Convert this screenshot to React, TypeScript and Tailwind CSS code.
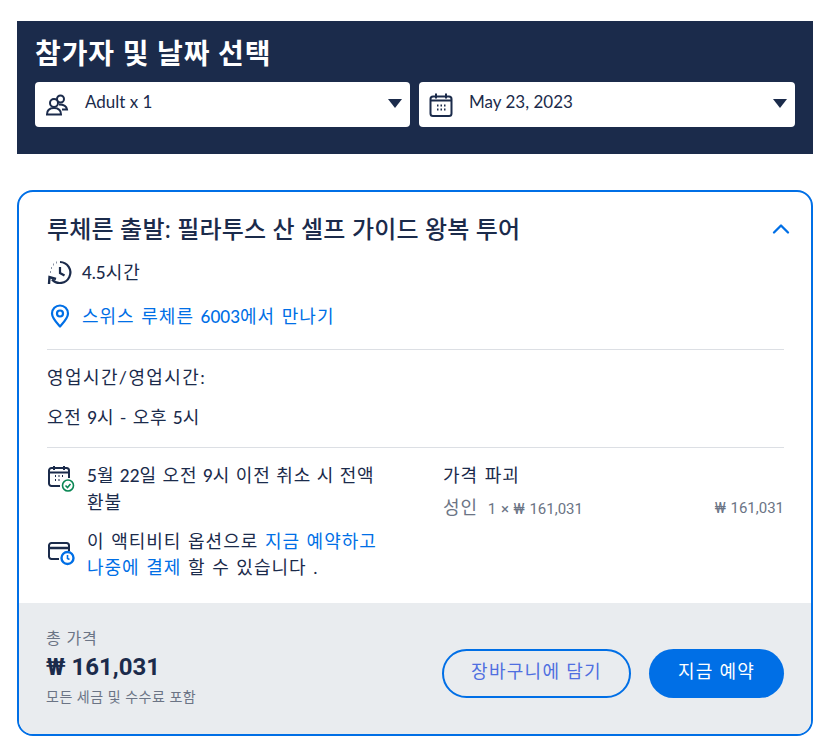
import type { ReactNode } from "react"
import { ChevronUp } from "lucide-react"

const font = { fontFamily: '"Lato", "Noto Sans CJK KR", sans-serif' }

function Num({ children }: { children: ReactNode }) {
  return <span className="text-[17px] font-medium tracking-normal">{children}</span>
}

function Price({ children, className }: { children: ReactNode; className: string }) {
  return <span className={"font-['Roboto'] tracking-normal " + className}>{children}</span>
}

function PeopleIcon() {
  return (
    <svg width="24" height="24" viewBox="0 0 24 24" fill="none" stroke="#1b2b4b" strokeWidth="2">
      <circle cx="15.5" cy="6" r="3.5" />
      <circle cx="9" cy="10" r="4" fill="#fff" />
      <path d="M14 11.5c4 0 7.5 1.5 8 5h-5" />
      <path d="M2 21.500c0-4.500 3-6.500 7-6.500s7 2 7 6.500z" fill="#fff" />
    </svg>
  )
}

function CalendarIcon() {
  return (
    <svg width="24" height="24" viewBox="0 0 24 24" fill="none" stroke="#1b2b4b" strokeWidth="2">
      <rect x="1.500" y="3.500" width="21" height="19.500" rx="2.500" />
      <path d="M1.500 7.500h21M7 0.500v5M17 0.500v5" />
      <path d="M8 12.500h1.500M11.500 12.500h1.500M15 12.500h1.500M8 16.500h1.500M11.500 16.500h1.500M15 16.500h1.500" strokeWidth="2" />
    </svg>
  )
}

function HistoryIcon() {
  return (
    <svg width="26" height="26" viewBox="0 0 26 26" fill="none" stroke="#1b2b4b" strokeWidth="2.200">
      <path d="M13 3a10.500 10.500 0 1 1-8 17.500" />
      <path d="M13 8v6l4.500 2.500" />
      <path d="M2 25l.5-7 6.500 2" strokeWidth="2.400" />
      <path d="M3 13h.5M4 9h.5M6.500 5.500h.5M9.500 3.500h.5" strokeWidth="2" />
    </svg>
  )
}

function PinIcon() {
  return (
    <svg width="20" height="24" viewBox="0 0 20 24" fill="none" stroke="#006fe6" strokeWidth="2.200">
      <path d="M10 22.500C6 18 2 14 2 9.500a8 8 0 0 1 16 0c0 4.500-4 8.500-8 13z" strokeLinejoin="round" />
      <circle cx="10" cy="9.500" r="3" />
    </svg>
  )
}

function CalendarCheckIcon() {
  return (
    <svg width="28" height="28" viewBox="0 0 28 28" fill="none" stroke="#1b2b4b" strokeWidth="2">
      <path d="M13 21H4.500A2.500 2.500 0 0 1 2 18.500V5.500A2.500 2.500 0 0 1 4.500 3h15A2.500 2.500 0 0 1 22 5.500V13" />
      <path d="M2 7.500h20M7 1v4M17 1v4" />
      <path d="M8 11h1M11.500 11h1M15 11h1M8 15h1M11.500 15h1" strokeWidth="1.800" />
      <circle cx="21" cy="20.500" r="5.500" fill="#fff" stroke="#0a8754" strokeWidth="1.600" />
      <path d="M18.500 20.500l2 2 3-3.500" stroke="#0a8754" strokeWidth="1.600" />
    </svg>
  )
}

function CardClockIcon() {
  return (
    <svg width="28" height="28" viewBox="0 0 28 28" fill="none" stroke="#1b2b4b" strokeWidth="2">
      <path d="M12 21H4.500A2.500 2.500 0 0 1 2 18.500v-11A2.500 2.500 0 0 1 4.500 5h15A2.500 2.500 0 0 1 22 7.500V13" />
      <path d="M2 10h20" strokeWidth="2.600" />
      <circle cx="20.500" cy="20" r="6" fill="#fff" stroke="#006fe6" strokeWidth="2.400" />
      <path d="M20.500 17v3.500l2 1" stroke="#006fe6" strokeWidth="1.600" />
    </svg>
  )
}

function SelectBox({ icon, label, className }: { icon: ReactNode; label: string; className: string }) {
  return (
    <div className={"flex h-[45px] items-center rounded-[4px] bg-white pl-[10px] pr-[8px] " + className}>
      <span className="flex w-[24px] justify-center">{icon}</span>
      <span className="ml-[16px] -mt-[5px] flex-1 text-[17px] text-[#1b2b4b]">{label}</span>
      <span className="-mt-[2px] h-0 w-0 border-x-[7.500px] border-t-[9px] border-x-transparent border-t-[#1b2b4b]" />
    </div>
  )
}

export default function App() {
  return (
    <div className="min-h-[750px] bg-white px-[17px] pt-[21px]" style={font}>
      <section className="h-[133px] bg-[#1b2b4b] px-[18px] pt-[13px]">
        <h2 className="text-[28px] leading-[38px] font-bold tracking-[0.900px] text-white">참가자 및 날짜 선택</h2>
        <div className="mt-[10px] flex gap-[9px]">
          <SelectBox icon={<PeopleIcon />} label="Adult x 1" className="w-[375px]" />
          <SelectBox icon={<CalendarIcon />} label="May 23, 2023" className="w-[376px]" />
        </div>
      </section>

      <section className="mt-[36px] h-[546px] overflow-hidden rounded-[16px] border-2 border-[#006fe6]">
        <div className="h-[411px] pl-[28px] pr-[27px] pt-[19px] text-[18px] tracking-[1px] text-[#1b2b4b] [word-spacing:1px]">
          <div className="flex items-center justify-between">
            <h3 className="text-[24px] leading-[36px] font-medium tracking-[0.200px] [word-spacing:0]">루체른 출발: 필라투스 산 셀프 가이드 왕복 투어</h3>
            <ChevronUp className="mr-[-11px] h-[28px] w-[28px] text-[#006fe6]" strokeWidth={2} />
          </div>
          <div className="mt-[10px] flex h-[30px] items-center gap-[9px]">
            <HistoryIcon />
            <span><Num>4.5</Num>시간</span>
          </div>
          <div className="mt-[14px] flex h-[30px] items-center gap-[12px] pl-[3px] text-[#006fe6]">
            <PinIcon />
            <span>스위스 루체른 <Num>6003</Num>에서 만나기</span>
          </div>
          <div className="mt-[18px] border-t border-[#dcdfe4] pt-[14px] leading-[26px]">
            <p className="tracking-[1.400px]">영업시간/영업시간:</p>
            <p className="mt-[14px] tracking-[0.800px] [word-spacing:0]">오전 <Num>9</Num>시 - 오후 <Num>5</Num>시</p>
          </div>
          <div className="mt-[16px] flex border-t border-[#dcdfe4] pt-[14px] leading-[26px]">
            <div className="w-[396px]">
              <div className="flex gap-[12px]">
                <span className="mt-[3px]"><CalendarCheckIcon /></span>
                <p className="w-[300px] tracking-[0.900px] [word-spacing:0]"><Num>5</Num>월 <Num>22</Num>일 오전 <Num>9</Num>시 이전 취소 시 전액 환불</p>
              </div>
              <div className="mt-[13px] flex gap-[12px]">
                <span className="mt-[10px]"><CardClockIcon /></span>
                <p className="w-[296px]">
                  이 액티비티 옵션으로 <span className="text-[#006fe6]">지금 예약하고 나중에 결제</span> 할 수 있습니다 .
                </p>
              </div>
            </div>
            <div className="flex-1">
              <p>가격 파괴</p>
              <div className="mt-[6px] flex items-center justify-between text-[#6b7485]">
                <span>성인 <Price className="ml-[3px] text-[15px]">1 × ₩ 161,031</Price></span>
                <Price className="text-[15px]">₩ 161,031</Price>
              </div>
            </div>
          </div>
        </div>
        <div className="flex h-[131px] items-center justify-between bg-[#e9ecef] px-[27px]">
          <div className="-mt-[3px]">
            <p className="text-[16px] leading-[20px] tracking-[0.800px] text-[#6b7485]">총 가격</p>
            <p className="leading-[38px] text-[#1b2b4b]"><Price className="text-[24px] font-bold">₩ 161,031</Price></p>
            <p className="text-[14px] leading-[18px] tracking-[0.500px] text-[#6b7485]">모든 세금 및 수수료 포함</p>
          </div>
          <div className="mt-[10px] flex gap-[18px]">
            <button className="h-[49px] w-[189px] rounded-full border-2 border-[#006fe6] pb-[4px] text-[18px] tracking-[1.300px] text-[#4f6fe0]">장바구니에 담기</button>
            <button className="h-[49px] w-[135px] rounded-full bg-[#006fe6] pb-[4px] text-[18px] tracking-[1.200px] text-white">지금 예약</button>
          </div>
        </div>
      </section>
    </div>
  )
}
